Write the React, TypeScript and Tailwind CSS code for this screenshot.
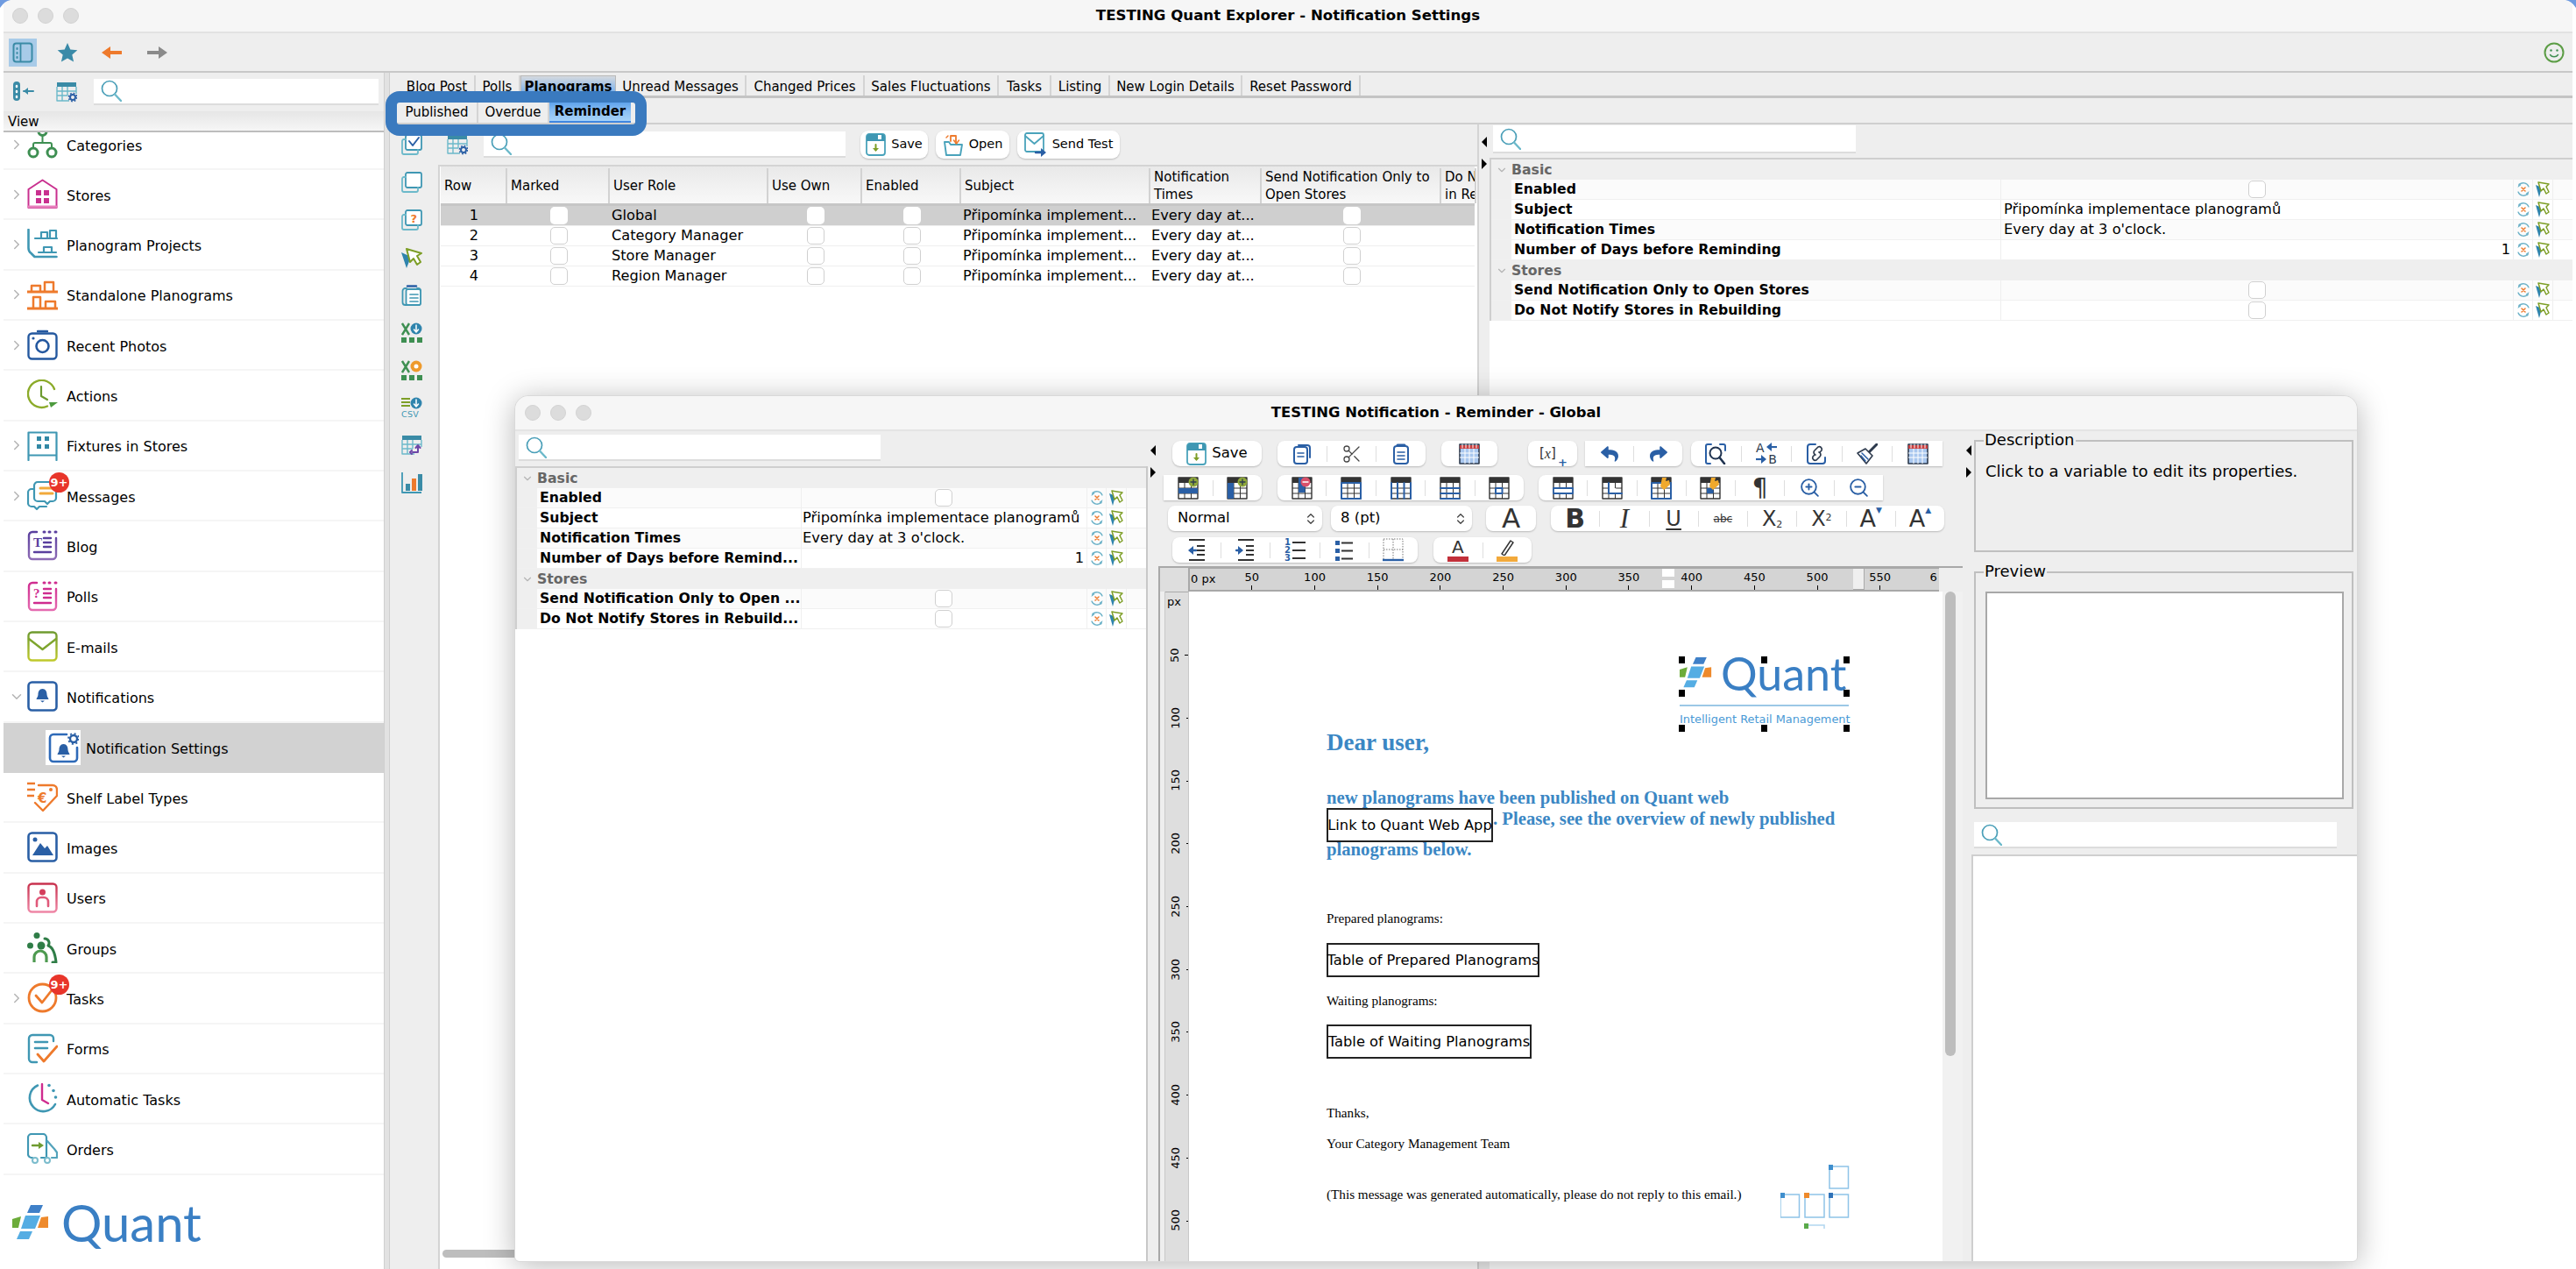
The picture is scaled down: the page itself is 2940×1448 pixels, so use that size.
import type { ReactNode } from "react";
import { Fragment } from "react";
import { ChevronDown, ChevronRight, ChevronsUpDown, Scissors, ZoomIn, ZoomOut } from "lucide-react";
import { FaReply, FaShare } from "react-icons/fa";

const TEAL = "#3f97b3";
const NAVY = "#2a5fa5";

type SvgProps = { w: number; h?: number; vb?: string; children: ReactNode };

const Svg = ({ w, h, vb, children }: SvgProps) => (
  <svg
    width={w}
    height={h ?? w}
    viewBox={vb ?? `0 0 ${w} ${h ?? w}`}
    fill="none"
    strokeLinecap="round"
    strokeLinejoin="round"
    className="shrink-0 block"
  >
    {children}
  </svg>
);

const SearchIcon = () => (
  <Svg w={24} h={25}>
    <circle cx="10" cy="10" r="8.5" stroke="#4a9fb8" strokeWidth="1.7" />
    <path d="M16 16.5 23 24" stroke="#6cb9ca" strokeWidth="2.4" />
  </Svg>
);

const SearchBox = ({ className }: { className: string }) => (
  <div className={`flex items-center pl-[8px] bg-white border-b-2 border-[#dcdcdc] ${className}`}>
    <SearchIcon />
  </div>
);

/* sidebar icons, all 35 px */
const IconCategories = () => (
  <Svg w={35}>
    <g stroke="#3e8f52" strokeWidth="3">
      <circle cx="17.5" cy="3" r="4.5" />
      <circle cx="7" cy="27" r="5" />
      <circle cx="28" cy="27" r="5" />
      <path d="M17.5 8v8M7 22v-4a2 2 0 0 1 2-2h17a2 2 0 0 1 2 2v4" strokeWidth="2" />
    </g>
  </Svg>
);
const IconStores = () => (
  <Svg w={35}>
    <path d="M1.5 12 17.5 1.5 33.5 12v21h-32z" stroke="#c9308f" strokeWidth="2" />
    <path d="M1.5 32h32" stroke="#e77fbb" strokeWidth="3" />
    <path d="M10 13h6v6h-6zM19 13h6v6h-6zM10 22h6v6h-6zM19 22h6v6h-6z" fill="#c9308f" />
  </Svg>
);
const IconProjects = () => (
  <Svg w={35}>
    <g stroke={TEAL} strokeWidth="2.6">
      <path d="M1.5 1v21q0 4 3 6l4 4h25" />
      <path d="M9 11h25M16 11V4h7v7M26 11V2h7v9M19 27v-6h9v6M13 27h20" strokeWidth="2.2" />
    </g>
  </Svg>
);
const IconStandalone = () => (
  <Svg w={35}>
    <g stroke="#ee7a2c" strokeWidth="3" strokeLinecap="butt">
      <path d="M0 14h35M0 33h35" />
      <path d="M5 13V7h10v6M20 13V3h10v10M7 32V20h8v12M21 32v-7h11v7" strokeWidth="2.5" />
    </g>
  </Svg>
);
const IconPhotos = () => (
  <Svg w={35}>
    <rect x="1.5" y="4.5" width="32" height="29" rx="4" stroke="#24589f" strokeWidth="2.4" />
    <circle cx="17.5" cy="19" r="7" stroke="#24589f" strokeWidth="2.6" />
    <circle cx="7" cy="10" r="1.6" fill="#24589f" />
    <path d="M12 2h11" stroke="#24589f" strokeWidth="2.4" />
  </Svg>
);
const IconActions = () => (
  <Svg w={35}>
    <path d="M23 30.5A15.5 15.5 0 1 1 31 11" stroke="#8cab2a" strokeWidth="2.4" />
    <path d="M16 8v11l7 4" stroke="#6d9b30" strokeWidth="2.2" />
    <path d="M25 26h10l-8 6z" fill="#4d9a3e" />
  </Svg>
);
const IconFixtures = () => (
  <Svg w={35}>
    <path d="M1.5 34V2.5h32V34M1.5 28.5h32" stroke={TEAL} strokeWidth="2.2" />
    <path d="M11 7h5v5h-5zM20 7h5v5h-5zM11 16h5v5h-5zM20 16h5v5h-5z" fill="#3288a5" />
  </Svg>
);
const IconMessages = () => (
  <Svg w={35}>
    <path d="M8 10H5a4 4 0 0 0-4 4v12a4 4 0 0 0 4 4h3l3 3 3-3h8" stroke={TEAL} strokeWidth="2.2" />
    <path d="M12 2h17a4 4 0 0 1 4 4v14a4 4 0 0 1-4 4h-3l-3 3-3-3h-8a4 4 0 0 1-4-4V6a4 4 0 0 1 4-4z" stroke={TEAL} strokeWidth="2.2" fill="#fff" />
    <path d="M15 9h14M15 15h14" stroke="#f2a93b" strokeWidth="3" />
  </Svg>
);
const ListFrame = ({ a, b, id, glyph }: { a: string; b: string; id: string; glyph: string }) => (
  <Svg w={35}>
    <defs>
      <linearGradient id={id} x1="0" y1="0" x2="0" y2="1">
        <stop offset="0" stopColor={a} />
        <stop offset="1" stopColor={b} />
      </linearGradient>
    </defs>
    <path d="M11 2H6a4 4 0 0 0-4 4v23a4 4 0 0 0 4 4h23a4 4 0 0 0 4-4V9" stroke={`url(#${id})`} strokeWidth="2.4" />
    <path d="M19 2h1M25 2h1M32 2h1" stroke={a} strokeWidth="3" />
    <text x="7" y="19" fontSize="15" fontWeight="700" fontFamily="Liberation Serif, serif" fill={a}>{glyph}</text>
    <path d="M19 9h8M19 14h8M19 19h8M8 25h19" stroke={a} strokeWidth="2.4" />
  </Svg>
);
const IconBlog = () => <ListFrame id="blogg" a="#5a3f9e" b="#8d6bb5" glyph="T" />;
const IconPolls = () => <ListFrame id="pollg" a="#cf2c8f" b="#e56ab0" glyph="?" />;
const IconEmails = () => (
  <Svg w={35}>
    <defs>
      <linearGradient id="mailg" x1="0" y1="0" x2="0" y2="1">
        <stop offset="0" stopColor="#6f9b30" />
        <stop offset="1" stopColor="#bfc92c" />
      </linearGradient>
    </defs>
    <rect x="1.5" y="1.5" width="32" height="32" rx="4" stroke="url(#mailg)" strokeWidth="2.4" />
    <path d="M2 9l15.5 12L33 9" stroke="#7ea52e" strokeWidth="2.4" />
  </Svg>
);
const Bell = ({ x = 0, y = 0 }: { x?: number; y?: number }) => (
  <g transform={`translate(${x} ${y})`}>
    <path d="M7 0c3.5 0 5 3 5 6.5 0 2.5 2 4.5 2 5.5H0c0-1 2-3 2-5.5C2 3 3.5 0 7 0z" fill={NAVY} />
    <path d="M4.5 13.5h5l-2.5 2z" fill={NAVY} />
  </g>
);
const IconNotifications = () => (
  <Svg w={35}>
    <rect x="1.5" y="1.5" width="32" height="32" rx="4" stroke={NAVY} strokeWidth="2.6" />
    <Bell x={10.5} y={9} />
  </Svg>
);
const IconNotificationSettings = () => (
  <Svg w={35}>
    <path d="M21 2H6a4 4 0 0 0-4 4v23a4 4 0 0 0 4 4h23a4 4 0 0 0 4-4V17" stroke="#2e6ab8" strokeWidth="2.6" />
    <Bell x={10.5} y={13} />
    <circle cx="29" cy="7" r="4" stroke={NAVY} strokeWidth="2.4" />
    <circle cx="29" cy="7" r="6" stroke={NAVY} strokeWidth="1.8" strokeDasharray="2 2.7" strokeLinecap="butt" />
  </Svg>
);
const IconShelfLabel = () => (
  <Svg w={35}>
    <path d="M13 4h16a5 5 0 0 1 5 5v7L18 33 9 24" stroke="#ee7a2c" strokeWidth="2.4" />
    <path d="M0 2h9M0 9h9M0 16h8" stroke="#ee7a2c" strokeWidth="2.4" strokeLinecap="butt" />
    <circle cx="27" cy="9" r="2" fill="#ee7a2c" />
    <text x="12" y="24" fontSize="15" fontWeight="700" fontFamily="DejaVu Sans, sans-serif" fill="#ee7a2c">€</text>
  </Svg>
);
const IconImages = () => (
  <Svg w={35}>
    <rect x="1.5" y="1.5" width="32" height="32" rx="4" stroke={NAVY} strokeWidth="2.6" />
    <path d="M6 27 15 13l5 6 3-3 7 11z" fill={NAVY} />
    <circle cx="9" cy="9" r="2.5" fill={NAVY} />
  </Svg>
);
const IconUsers = () => (
  <Svg w={35}>
    <defs>
      <linearGradient id="userg" x1="0" y1="0" x2="0" y2="1">
        <stop offset="0" stopColor="#c8324e" />
        <stop offset="1" stopColor="#ef87a6" />
      </linearGradient>
    </defs>
    <rect x="1.5" y="1.5" width="32" height="32" rx="4" stroke="url(#userg)" strokeWidth="2.4" />
    <circle cx="17.5" cy="11" r="3.5" fill="#d43e5c" />
    <path d="M11 27v-5a5 5 0 0 1 5-5h3a5 5 0 0 1 5 5v5" stroke="#e0597a" strokeWidth="2.6" />
    <path d="M16 21h3" stroke="#fff" strokeWidth="1.5" />
  </Svg>
);
const IconGroups = () => (
  <Svg w={35}>
    <circle cx="11" cy="3.5" r="3.5" fill="#2f7d47" />
    <circle cx="3.5" cy="15" r="3.5" fill="#2f7d47" />
    <circle cx="16" cy="15" r="4.5" fill="#2f7d47" />
    <path d="M20 7a5 5 0 0 1 4 8c6 2 8 10 9 19h-4" stroke="#2f7d47" strokeWidth="3" />
    <path d="M8 34v-6a7 7 0 0 1 14 0v6" stroke="#4e9a50" strokeWidth="3.2" strokeLinecap="butt" />
  </Svg>
);
const IconTasks = () => (
  <Svg w={35}>
    <circle cx="17.5" cy="17.5" r="15.5" stroke="#ee7a2c" strokeWidth="2.8" />
    <path d="M10 15l7 8 11-14" stroke="#ee7a2c" strokeWidth="2.8" />
  </Svg>
);
const IconForms = () => (
  <Svg w={35}>
    <path d="M30 9V6a4 4 0 0 0-4-4H6a4 4 0 0 0-4 4v23a4 4 0 0 0 4 4h5" stroke={TEAL} strokeWidth="2.4" />
    <path d="M9 10h14M9 17h14" stroke={TEAL} strokeWidth="2.6" />
    <path d="M12 24l7 8 15-17" stroke="#ee7a2c" strokeWidth="2.8" />
  </Svg>
);
const IconAuto = () => (
  <Svg w={35}>
    <path d="M12 2.5A15.5 15.5 0 1 0 32 24" stroke={TEAL} strokeWidth="2.6" />
    <path d="M17 1v18l7 4" stroke="#cf2c8f" strokeWidth="2.4" />
    <circle cx="25" cy="2.5" r="1.8" fill={TEAL} />
    <circle cx="30" cy="8.5" r="1.8" fill={TEAL} />
    <circle cx="32.5" cy="16" r="1.8" fill={TEAL} />
  </Svg>
);
const IconOrders = () => (
  <Svg w={35}>
    <path d="M6 28H5a4 4 0 0 1-4-4V5a4 4 0 0 1 4-4h13a4 4 0 0 1 4 4v23h-6" stroke={TEAL} strokeWidth="2.2" />
    <path d="M23 9l8 9 3 4v6h-6" stroke="#53a3bb" strokeWidth="2.2" />
    <circle cx="9" cy="31" r="3" stroke="#7bbccd" strokeWidth="2" />
    <circle cx="23" cy="31" r="3" stroke="#7bbccd" strokeWidth="2" />
    <path d="M6 14h9" stroke="#6f9b30" strokeWidth="2.4" />
    <path d="M13 10l6 4-6 4z" fill="#6f9b30" />
  </Svg>
);

const QuantMark = ({ w }: { w: number }) => (
  <svg width={w} height={w} viewBox="0 0 42 42" className="shrink-0 block">
    <path d="M21 1h14l-4 9H17z" fill="#3f80c8" />
    <path d="M0 17l10-3-3 13H0z" fill="#6cac3a" />
    <path d="M15 13h17l-6 15H10z" fill="#55ade3" />
    <path d="M33 15l8-1v13H29z" fill="#ee8a2c" />
    <path d="M9 31h14l-4 9H5z" fill="#55ade3" />
  </svg>
);

/* small property row icons */
const ResetIcon = () => (
  <Svg w={16} h={20}>
    <path d="M3 5A6.5 6.5 0 0 1 14 7M13 15A6.5 6.5 0 0 1 2 13" stroke="#6cb2c8" strokeWidth="1.3" />
    <path d="M1.5 8 3 3l2.5 2zM14.5 12 13 17l-2.5-2z" fill="#6cb2c8" />
    <path d="M6 8l4 4M10 8l-4 4" stroke="#ee7a2c" strokeWidth="1.5" />
  </Svg>
);
const PointerIcon = () => (
  <Svg w={16} h={20}>
    <path d="M0 5 7 8 4 19z" fill="#2f84ad" />
    <path d="M3 2 15 4l-3 3 3 6-3 2-3-6-3 3z" fill="#fff" stroke="#7d9e26" strokeWidth="1.5" />
  </Svg>
);

/* left toolbar icons of the main panel */
const CopyFrame = ({ children }: { children?: ReactNode }) => (
  <Svg w={24}>
    <rect x="5" y="1" width="18" height="17" rx="2" fill="#fff" stroke={TEAL} strokeWidth="1.8" />
    <path d="M5 6H3a2 2 0 0 0-2 2v13a2 2 0 0 0 2 2h14a2 2 0 0 0 2-2v-3" stroke="#6cb9ca" strokeWidth="1.8" />
    {children}
  </Svg>
);
const SideCheck = () => <CopyFrame><path d="M9 8l4 5 7-9" stroke={NAVY} strokeWidth="2" /></CopyFrame>;
const SideCopy = () => <CopyFrame />;
const SideQuestion = () => (
  <CopyFrame>
    <text x="10.5" y="15" fontSize="13" fontWeight="700" fontFamily="DejaVu Sans, sans-serif" fill="#ee7a2c">?</text>
  </CopyFrame>
);
const SidePointer = () => (
  <Svg w={24}>
    <path d="M0 6 11 11 6 24z" fill="#2f84ad" />
    <path d="M6 2 23 7l-5 3 4 7-4 3-4-7-4 4z" fill="#fff" stroke="#7d9e26" strokeWidth="2" />
  </Svg>
);
const SideClipboard = () => (
  <Svg w={24}>
    <path d="M6 4H4.5a3 3 0 0 0-3 3v13a3 3 0 0 0 3 3H19a3 3 0 0 0 3-3V7a3 3 0 0 0-3-3h-1" stroke={TEAL} strokeWidth="1.8" />
    <path d="M7 1.5h10" stroke={NAVY} strokeWidth="2.4" />
    <rect x="5.5" y="5" width="16.5" height="18" rx="2" fill="#fff" stroke={TEAL} strokeWidth="1.8" />
    <path d="M10 11h9M10 15h9M10 19h9" stroke={TEAL} strokeWidth="1.7" />
  </Svg>
);
const ExportIcon = ({ dot, glyph }: { dot: string; glyph: ReactNode }) => (
  <Svg w={24}>
    <path d="M1 2l8 13M9 2 1 15" stroke="#3e8f52" strokeWidth="2.4" strokeLinecap="butt" />
    <circle cx="17" cy="8" r="6.5" fill={dot} />
    {glyph}
    <path d="M0 18h6v6H0zM9 18h6v6H9zM18 18h6v6h-6z" fill="#3e8f52" />
  </Svg>
);
const SideCsv = () => (
  <Svg w={24}>
    <path d="M0 2h10M0 6h10M0 10h10" stroke="#7d9e26" strokeWidth="2.2" strokeLinecap="butt" />
    <circle cx="17" cy="7" r="6.5" fill="#2f84ad" />
    <path d="M17 3v7M14.5 8l2.5 3 2.5-3" stroke="#fff" strokeWidth="1.5" />
    <text x="0" y="23" fontSize="9.5" fontFamily="DejaVu Sans, sans-serif" letterSpacing="0.3" fill={TEAL}>CSV</text>
  </Svg>
);
const TableGear = ({ arrows }: { arrows?: boolean }) => (
  <Svg w={24}>
    <rect x="1" y="1" width="22" height="5" fill="#3a8ba6" />
    <path d="M1 6v16h14M23 6v8M1 11h14M1 16h12M7 6v16M13 6v10M13 11h10" stroke="#6cb9ca" strokeWidth="1.4" strokeLinecap="butt" />
    {arrows ? (
      <path d="M13 20h6v-7M16.5 15l2.5-3 2.5 3M12 18l-2 2 2 2" stroke="#6d47a8" strokeWidth="2" />
    ) : (
      <>
        <circle cx="19" cy="18" r="3" stroke={NAVY} strokeWidth="2" />
        <circle cx="19" cy="18" r="4.7" stroke={NAVY} strokeWidth="1.5" strokeDasharray="1.8 1.9" strokeLinecap="butt" />
      </>
    )}
  </Svg>
);
const SideChart = () => (
  <Svg w={24}>
    <path d="M1 0v23h22" stroke={TEAL} strokeWidth="1.8" strokeLinecap="butt" />
    <path d="M5 13h5v8H5z" fill="#3a8ba6" />
    <path d="M12 7h5v14h-5z" fill="#ee7a2c" />
    <path d="M19 2h5v19h-5z" fill="#3a8ba6" />
  </Svg>
);

const SaveIcon = () => (
  <Svg w={23} h={26}>
    <rect x="1" y="1" width="21" height="24" rx="3" fill="#fff" stroke="#4aa3bb" strokeWidth="1.8" />
    <path d="M1 5a4 4 0 0 1 4-4h13a4 4 0 0 1 4 4v4H1z" fill="#3f97b3" />
    <path d="M14 2h4v5h-4z" fill="#fff" />
    <path d="M11.5 13v6" stroke="#7d9e26" strokeWidth="2" />
    <path d="M8 17h7l-3.5 4z" fill="#7d9e26" />
  </Svg>
);
const OpenIcon = () => (
  <Svg w={24} h={26}>
    <path d="M2 10h5l2 3h13l-2 12H4z" stroke="#4aa3bb" strokeWidth="1.9" />
    <path d="M9 9V3h6v8" stroke="#ee7a2c" strokeWidth="1.8" />
    <path d="M12.5 8l3 4 3-4" stroke="#ee7a2c" strokeWidth="1.5" />
    <path d="M6 3l-2 2" stroke="#ee7a2c" strokeWidth="1.5" />
  </Svg>
);
const SendIcon = () => (
  <Svg w={26} h={28}>
    <rect x="1" y="1" width="21" height="21" rx="2" fill="#fff" stroke="#4aa3bb" strokeWidth="1.8" />
    <path d="M1 4l10.5 9L22 4" stroke="#4aa3bb" strokeWidth="1.8" />
    <path d="M13 23h9" stroke={NAVY} strokeWidth="2.4" />
    <path d="M19 18l6 5-6 5z" fill={NAVY} />
  </Svg>
);

/* editor toolbar icons */
const PageIcon = () => (
  <Svg w={24}>
    <path d="M8 2h10a3 3 0 0 1 3 3v11" stroke={NAVY} strokeWidth="2" />
    <rect x="3" y="4" width="15" height="19" rx="3" fill="#fff" stroke={NAVY} strokeWidth="2" />
    <path d="M7 11h7M7 15h7" stroke={NAVY} strokeWidth="1.6" />
  </Svg>
);
const PasteIcon = () => (
  <Svg w={24}>
    <rect x="4" y="3" width="16" height="20" rx="3" stroke={NAVY} strokeWidth="2" />
    <path d="M8 2h8" stroke={NAVY} strokeWidth="3" />
    <path d="M8 10h8M8 14h8M8 18h8" stroke={NAVY} strokeWidth="1.6" />
  </Svg>
);
const CalendarIcon = () => (
  <Svg w={24}>
    <rect x="1" y="1" width="22" height="22" fill="#a9c7ee" stroke="#2d3a4d" strokeWidth="1.6" />
    <path d="M1 2h22v4H1z" fill="#c94040" />
    <path d="M4 1v4M8 1v4M12 1v4M16 1v4M20 1v4" stroke="#fff" strokeWidth="1" />
    <path d="M1 11h22M1 16h22M7 6v17M12 6v17M17 6v17" stroke="#fff" strokeWidth="1" strokeLinecap="butt" />
  </Svg>
);
const VariableIcon = () => (
  <div className="relative w-[34px] h-[24px] flex items-center justify-start pl-[2px] text-[15px] text-[#333]">
    <span>[</span>
    <span className="italic font-['Liberation_Serif',serif] text-[16px]">x</span>
    <span>]</span>
    <span className="absolute right-[0px] -bottom-[4px] text-[13px] leading-none font-bold text-[#2a5fa5]">+</span>
  </div>
);
const FindIcon = () => (
  <Svg w={24}>
    <path d="M7 1H3a2 2 0 0 0-2 2v18a2 2 0 0 0 2 2h3M17 1h4a2 2 0 0 1 2 2v5" stroke={NAVY} strokeWidth="2" />
    <circle cx="12" cy="11" r="6.5" stroke="#1f3350" strokeWidth="2" />
    <path d="M16.5 16 22 23" stroke="#1f3350" strokeWidth="2.6" />
  </Svg>
);
const ReplaceIcon = () => (
  <div className="relative w-[24px] h-[27px] text-[#2d3a4d] text-[14px] leading-none">
    <span className="absolute left-0 top-0">A</span>
    <span className="absolute right-0 bottom-0">B</span>
    <svg width="12" height="10" viewBox="0 0 12 10" className="absolute right-0 top-[1px]">
      <path d="M5 5h7" stroke={NAVY} strokeWidth="2.2" />
      <path d="M0 5l6-5v10z" fill={NAVY} />
    </svg>
    <svg width="12" height="10" viewBox="0 0 12 10" className="absolute left-0 bottom-[2px]">
      <path d="M0 5h7" stroke={NAVY} strokeWidth="2.2" />
      <path d="M12 5 6 0v10z" fill={NAVY} />
    </svg>
  </div>
);
const LinkIcon = () => (
  <Svg w={24}>
    <path d="M11 1H5a3 3 0 0 0-3 3v16a3 3 0 0 0 3 3h14a3 3 0 0 0 3-3V16" stroke={NAVY} strokeWidth="2" />
    <path d="M9 13l-2 2a3 3 0 0 0 4 4l4-4a3 3 0 0 0-1-5M15 10l2-2a3 3 0 0 0-4-4L9 8a3 3 0 0 0 1 5" stroke="#2d3a4d" strokeWidth="1.7" transform="translate(1 0)" />
  </Svg>
);
const BrushIcon = () => (
  <Svg w={24}>
    <path d="M23 1 14 10" stroke="#2d3a4d" strokeWidth="3" />
    <path d="M10 6l8 8-7 9-10-12z" fill="#fff" stroke="#2d3a4d" strokeWidth="1.6" />
    <path d="M6 11l7 7M5 14l5 6" stroke={NAVY} strokeWidth="1.5" />
  </Svg>
);

type TableIconProps = { hl?: ReactNode; badge?: ReactNode };
const TableIcon = ({ hl, badge }: TableIconProps) => (
  <Svg w={24} h={26}>
    <rect x="1" y="1" width="22" height="24" fill="#fff" stroke="#333" strokeWidth="1.4" />
    <rect x="1" y="1" width="22" height="6" fill="#333" />
    <path d="M1 13h22M1 19h22M8 7v18M15.5 7v18" stroke="#333" strokeWidth="1" strokeLinecap="butt" />
    {hl}
    {badge}
  </Svg>
);
const PlusBadge = () => (
  <g>
    <circle cx="18" cy="6" r="5.5" fill="#8fa83a" />
    <path d="M15 6h6M18 3v6" stroke="#2d3a4d" strokeWidth="1.3" />
  </g>
);
const MinusBadge = () => (
  <g>
    <circle cx="16" cy="6" r="5.5" fill="#d9506a" />
    <path d="M13 6h6" stroke="#fff" strokeWidth="1.3" />
  </g>
);
const WrenchBadge = () => <path d="M13 1h5l-1 4 4-1 1 5-7 6-4-4z" fill="#f0a92c" />;

const blue = "#2a5fa5";
const tableIcons = {
  rowBelow: <TableIcon hl={<rect x="1" y="13" width="22" height="6" fill={blue} />} badge={<PlusBadge />} />,
  colLeft: <TableIcon hl={<rect x="1" y="7" width="7" height="18" fill={blue} />} badge={<PlusBadge />} />,
  delCol: <TableIcon hl={<rect x="8" y="1" width="7.5" height="17" fill={blue} />} badge={<MinusBadge />} />,
  outer: <TableIcon hl={<rect x="1" y="7" width="22" height="18" fill="none" stroke={blue} strokeWidth="2" />} />,
  vert: <TableIcon hl={<path d="M8 7v18M15.5 7v18M1 7v18M23 7v18" stroke={blue} strokeWidth="2" />} />,
  horz: <TableIcon hl={<path d="M1 13h22M1 19h22M1 25h22" stroke={blue} strokeWidth="2" />} />,
  inner: <TableIcon hl={<rect x="8" y="13" width="7.5" height="6" fill="none" stroke={blue} strokeWidth="2" />} />,
  merge: <TableIcon hl={<rect x="1" y="13" width="22" height="6" fill="#fff" stroke={blue} strokeWidth="1.8" />} />,
  split: <TableIcon hl={<path d="M8 7v12h15" stroke={blue} strokeWidth="2" fill="#fff" />} />,
  propT: <TableIcon hl={<rect x="1" y="7" width="22" height="18" fill="none" stroke={blue} strokeWidth="2" />} badge={<WrenchBadge />} />,
  propC: <TableIcon hl={<rect x="8" y="13" width="7.5" height="6" fill={blue} />} badge={<WrenchBadge />} />,
};

const IndentIcon = ({ out }: { out?: boolean }) => (
  <Svg w={24} h={27}>
    <path d="M3 2h18M3 25h18M12 9h9M12 14h9M12 19h9" stroke="#333" strokeWidth="2" strokeLinecap="butt" />
    <path d={out ? "M2 14l6-5v10z" : "M9 14l-6-5v10z"} fill={NAVY} />
    <path d={out ? "M6 14h5" : "M1 14h5"} stroke={NAVY} strokeWidth="2.4" />
  </Svg>
);
const NumListIcon = () => (
  <div className="flex flex-col text-[10px] leading-[9px] font-bold text-[#2a5fa5] w-[24px] h-[27px] justify-center">
    {["1", "2", "3"].map((n) => (
      <div key={n} className="flex items-center gap-[2px]">
        {n}
        <div className="flex-1 h-[2px] bg-[#333]" />
      </div>
    ))}
  </div>
);
const BulletListIcon = () => (
  <Svg w={24} h={27}>
    <path d="M2 3h5v5H2zM2 12h5v5H2zM2 21h5v5H2z" fill={NAVY} />
    <path d="M9 5.5h13M9 14.5h13M9 23.5h13" stroke="#333" strokeWidth="2" strokeLinecap="butt" />
  </Svg>
);
const BordersIcon = () => (
  <Svg w={24} h={27}>
    <path d="M1 1h22v24H1zM12 1v24M1 13h22" stroke="#777" strokeWidth="1" strokeDasharray="1.5 1.5" strokeLinecap="butt" />
    <path d="M0 25h24" stroke={NAVY} strokeWidth="2.4" strokeLinecap="butt" />
  </Svg>
);
const ColorA = ({ bar, pen }: { bar: string; pen?: boolean }) => (
  <div className="flex flex-col items-center w-[24px] h-[27px]">
    {pen ? (
      <Svg w={20} h={20}>
        <path d="M4 18 14 3l3 2L7 20z" fill="#fff" stroke="#333" strokeWidth="1.5" />
      </Svg>
    ) : (
      <span className="text-[20px] leading-[20px] text-[#333]">A</span>
    )}
    <div className={`w-[24px] h-[6px] mt-[1px] ${bar}`} />
  </div>
);

const GText = ({ children, className }: { children: ReactNode; className?: string }) => (
  <span className={`leading-none text-[#333] ${className ?? ""}`}>{children}</span>
);

/* white rounded button group of the editor toolbar */
const Group = ({ items, className }: { items: ReactNode[]; className: string }) => (
  <div className={`flex items-center h-[29px] bg-white rounded-[8px] shadow-[0_1px_2px_rgba(0,0,0,0.22)] shrink-0 ${className}`}>
    {items.map((item, i) => (
      <Fragment key={i}>
        {i > 0 && <div className="w-px h-[18px] bg-[#dedede]" />}
        <div className="flex-1 flex items-center justify-center h-full">{item}</div>
      </Fragment>
    ))}
  </div>
);

const PillButton = ({ icon, label, className }: { icon: ReactNode; label: string; className: string }) => (
  <div className={`flex items-center justify-center gap-[6px] bg-white rounded-[9px] shadow-[0_1px_2px_rgba(0,0,0,0.22)] ${className}`}>
    {icon}
    {label}
  </div>
);

const Checkbox = ({ plain }: { plain?: boolean }) => (
  <div className={`w-[20px] h-[20px] rounded-[5px] bg-white ${plain ? "" : "border border-[#d0d0d0]"}`} />
);

const Lights = ({ className }: { className: string }) => (
  <div className={`flex gap-[11px] ${className}`}>
    <div className="w-[18px] h-[18px] rounded-full bg-[#dcdcdc] border border-[#d2d2d2]" />
    <div className="w-[18px] h-[18px] rounded-full bg-[#dcdcdc] border border-[#d2d2d2]" />
    <div className="w-[18px] h-[18px] rounded-full bg-[#dcdcdc] border border-[#d2d2d2]" />
  </div>
);

const SplitArrows = ({ className }: { className: string }) => (
  <div className={`flex flex-col items-center gap-[13px] shrink-0 ${className}`}>
    <div className="w-0 h-0 border-y-[6px] border-y-transparent border-r-[6px] border-r-black" />
    <div className="w-0 h-0 border-y-[6px] border-y-transparent border-l-[6px] border-l-black" />
  </div>
);

/* sidebar */
type NavItem = { label: string; icon: ReactNode; arrow?: "right" | "down"; badge?: boolean };
const navItems: NavItem[] = [
  { label: "Stores", icon: <IconStores />, arrow: "right" },
  { label: "Planogram Projects", icon: <IconProjects />, arrow: "right" },
  { label: "Standalone Planograms", icon: <IconStandalone />, arrow: "right" },
  { label: "Recent Photos", icon: <IconPhotos />, arrow: "right" },
  { label: "Actions", icon: <IconActions /> },
  { label: "Fixtures in Stores", icon: <IconFixtures />, arrow: "right" },
  { label: "Messages", icon: <IconMessages />, arrow: "right", badge: true },
  { label: "Blog", icon: <IconBlog /> },
  { label: "Polls", icon: <IconPolls /> },
  { label: "E-mails", icon: <IconEmails /> },
  { label: "Notifications", icon: <IconNotifications />, arrow: "down" },
];
const navItemsAfter: NavItem[] = [
  { label: "Shelf Label Types", icon: <IconShelfLabel /> },
  { label: "Images", icon: <IconImages /> },
  { label: "Users", icon: <IconUsers /> },
  { label: "Groups", icon: <IconGroups /> },
  { label: "Tasks", icon: <IconTasks />, arrow: "right", badge: true },
  { label: "Forms", icon: <IconForms /> },
  { label: "Automatic Tasks", icon: <IconAuto /> },
  { label: "Orders", icon: <IconOrders /> },
];

const NavRow = ({ item }: { item: NavItem }) => (
  <div className="flex items-center h-[57.33px] shrink-0 border-b-2 border-[#f5f5f5] text-[16px]">
    <div className="w-[27px] flex justify-center pl-[2px] shrink-0">
      {item.arrow === "right" && <ChevronRight size={18} color="#b4b4b4" strokeWidth={2} />}
      {item.arrow === "down" && <ChevronDown size={18} color="#b4b4b4" strokeWidth={2} />}
    </div>
    <div className="relative">
      {item.icon}
      {item.badge && (
        <div className="absolute left-[25px] -top-[9px] w-[23px] h-[23px] rounded-full bg-[#e8352a] text-white text-[13px] font-bold flex items-center justify-center">
          9+
        </div>
      )}
    </div>
    <span className="ml-[10px] pt-[4px]">{item.label}</span>
  </div>
);

const Sidebar = () => (
  <aside className="w-[434px] shrink-0 flex flex-col">
    <div className="h-[43px] flex items-center shrink-0">
      <div className="w-[46px] flex justify-center">
        <Svg w={26}>
          <rect x="1" y="1" width="8" height="22" rx="4" fill="#3a8ba6" />
          <path d="M5 6v1M5 12v1M5 18v1" stroke="#fff" strokeWidth="2.5" />
          <path d="M13 12h11" stroke="#3a8ba6" strokeWidth="2" />
          <path d="M13 12l5-4v8z" fill="#3a8ba6" />
        </Svg>
      </div>
      <div className="w-[51px] flex justify-center">
        <TableGear />
      </div>
      <SearchBox className="w-[325px] h-[30px] ml-[6px]" />
    </div>
    <div className="h-[24px] mt-[1px] shrink-0 flex items-center pl-[5px] pt-[2px] text-[15px] bg-linear-to-b from-[#e6e6e6] to-[#f6f6f6] border-b-2 border-[#bdbdbd]">
      View
    </div>
    <div className="flex-1 flex flex-col bg-white overflow-hidden">
      <div className="h-[43px] shrink-0 overflow-hidden">
        <div className="-mt-[14px]">
          <NavRow item={{ label: "Categories", icon: <IconCategories />, arrow: "right" }} />
        </div>
      </div>
      {navItems.map((item) => (
        <NavRow key={item.label} item={item} />
      ))}
      <div className="flex items-center h-[57.33px] shrink-0 bg-[#d2d2d2] text-[16px]">
        <div className="ml-[48px] w-[40px] h-[40px] bg-white flex items-center justify-center shrink-0">
          <IconNotificationSettings />
        </div>
        <span className="ml-[6px] pt-[4px]">Notification Settings</span>
      </div>
      {navItemsAfter.map((item) => (
        <NavRow key={item.label} item={item} />
      ))}
      <div className="flex items-center ml-[10px] mt-[29px]">
        <QuantMark w={42} />
        <span className="ml-[14px] text-[58px] leading-[50px] font-['Lato',sans-serif] text-[#3a7fc4]">Quant</span>
      </div>
    </div>
  </aside>
);

/* tabs */
const topTabs = [
  { label: "Blog Post", w: "w-[87px]" },
  { label: "Polls", w: "w-[51px]" },
  { label: "Planograms", w: "w-[109px]", active: true },
  { label: "Unread Messages", w: "w-[149px]" },
  { label: "Changed Prices", w: "w-[135px]" },
  { label: "Sales Fluctuations", w: "w-[153px]" },
  { label: "Tasks", w: "w-[60px]" },
  { label: "Listing", w: "w-[67px]" },
  { label: "New Login Details", w: "w-[151px]" },
  { label: "Reset Password", w: "w-[135px]" },
];

const TopTabs = () => (
  <div className="h-[29px] shrink-0 flex pl-[11px] border-b-[3px] border-[#c4c4c4] text-[15px]">
    {topTabs.map((t) =>
      t.active ? (
        <div
          key={t.label}
          className={`${t.w} mt-[3px] pt-[3px] flex items-center justify-center font-bold border border-b-0 border-[#b9b9b9] bg-linear-to-b from-[#d5d9de] to-[#6aa9ec]`}
        >
          {t.label}
        </div>
      ) : (
        <div key={t.label} className={`${t.w} mt-[3px] pt-[3px] flex items-center justify-center border-r-2 border-[#d4d4d4]`}>
          {t.label}
        </div>
      ),
    )}
  </div>
);

const SubTabs = () => (
  <div className="h-[30px] shrink-0 flex pl-[8px] pt-[5px] border-b-2 border-[#cfcfcf] text-[15px]">
    <div className="w-[93px] flex items-center justify-center border-r-2 border-[#d4d4d4]">Published</div>
    <div className="w-[81px] flex items-center justify-center border-r-2 border-[#d4d4d4]">Overdue</div>
    <div className="w-[93px] flex items-center justify-center font-bold bg-linear-to-b from-[#5fa3ec] via-[#8cc0f3] to-[#a6d2f8] border-b-2 border-[#3f86e0]">
      Reminder
    </div>
  </div>
);

/* notification table */
const ROWS = [
  { n: "1", role: "Global", active: true },
  { n: "2", role: "Category Manager" },
  { n: "3", role: "Store Manager" },
  { n: "4", role: "Region Manager" },
];

const HeaderCell = ({ children }: { children: ReactNode }) => (
  <div className="flex flex-col justify-center px-[4px] leading-[20px] overflow-hidden whitespace-nowrap border-r-2 border-[#d2d2d2]">
    {children}
  </div>
);

const NotificationTable = () => (
  <div className="text-[15px]">
    <div className="grid grid-cols-[76px_117px_181px_107px_113px_216px_127px_205px_40px] h-[45px] pt-[2px] ml-[1px] bg-linear-to-b from-[#e9e9e9] to-[#f8f8f8] border-b-[3px] border-[#c6c6c6]">
      <HeaderCell>Row</HeaderCell>
      <HeaderCell>Marked</HeaderCell>
      <HeaderCell>User Role</HeaderCell>
      <HeaderCell>Use Own</HeaderCell>
      <HeaderCell>Enabled</HeaderCell>
      <HeaderCell>Subject</HeaderCell>
      <HeaderCell>
        <span>Notification</span>
        <span>Times</span>
      </HeaderCell>
      <HeaderCell>
        <span>Send Notification Only to</span>
        <span>Open Stores</span>
      </HeaderCell>
      <HeaderCell>
        <span>Do N</span>
        <span>in Re</span>
      </HeaderCell>
    </div>
    {ROWS.map((r) => (
      <div
        key={r.n}
        className={`grid grid-cols-[76px_117px_181px_107px_113px_216px_127px_205px_40px] h-[23px] ml-[1px] text-[16.2px] leading-[20px] items-center border-b border-[#efefef] ${r.active ? "bg-[#cfcfcf]" : ""}`}
      >
        <div className="text-center">{r.n}</div>
        <div className="flex justify-center"><Checkbox plain={r.active} /></div>
        <div className="pl-[2px] whitespace-nowrap">{r.role}</div>
        <div className="flex justify-center"><Checkbox plain={r.active} /></div>
        <div className="flex justify-center"><Checkbox plain={r.active} /></div>
        <div className="pl-[2px] whitespace-nowrap">Připomínka implement...</div>
        <div className="pl-[1px] whitespace-nowrap">Every day at...</div>
        <div className="flex justify-center"><Checkbox plain={r.active} /></div>
        <div />
      </div>
    ))}
  </div>
);

/* property sheets */
type PropRow = { label: string; value?: string; check?: boolean; right?: string };
const mainProps: { section: string; rows: PropRow[] }[] = [
  {
    section: "Basic",
    rows: [
      { label: "Enabled", check: true },
      { label: "Subject", value: "Připomínka implementace planogramů" },
      { label: "Notification Times", value: "Every day at 3 o'clock." },
      { label: "Number of Days before Reminding", right: "1" },
    ],
  },
  {
    section: "Stores",
    rows: [
      { label: "Send Notification Only to Open Stores", check: true },
      { label: "Do Not Notify Stores in Rebuilding", check: true },
    ],
  },
];
const dialogProps: typeof mainProps = [
  {
    section: "Basic",
    rows: [
      { label: "Enabled", check: true },
      { label: "Subject", value: "Připomínka implementace planogramů" },
      { label: "Notification Times", value: "Every day at 3 o'clock." },
      { label: "Number of Days before Remind...", right: "1" },
    ],
  },
  {
    section: "Stores",
    rows: [
      { label: "Send Notification Only to Open ...", check: true },
      { label: "Do Not Notify Stores in Rebuild...", check: true },
    ],
  },
];

const PropSheet = ({ data, labelW, valuePad }: { data: typeof mainProps; labelW: string; valuePad: string }) => (
  <div className="border-t-2 border-[#cfcfcf] border-l-2 text-[15.7px] leading-[20px]">
    {data.map((s) => (
      <div key={s.section}>
        <div className="h-[23px] bg-[#efefef] flex items-center font-bold text-[#666]">
          <div className="w-[23px] flex justify-center shrink-0">
            <ChevronDown size={14} color="#b4b4b4" />
          </div>
          {s.section}
        </div>
        {s.rows.map((r, i) => (
          <div key={r.label} className={`h-[23px] flex items-center border-b border-[#f0f0f0] ${i % 2 === 0 ? "bg-[#fbfbfb]" : "bg-white"}`}>
            <div className="w-[23px] h-full bg-[#efefef] shrink-0" />
            <div className={`${labelW} shrink-0 pl-[3px] font-bold whitespace-nowrap overflow-hidden h-full flex items-center border-r border-[#efefef]`}>
              {r.label}
            </div>
            <div className={`flex-1 min-w-0 h-full flex items-center pr-[3px] whitespace-nowrap text-[16.3px] ${valuePad}`}>
              {r.check && (
                <div className="flex-1 flex justify-center">
                  <Checkbox />
                </div>
              )}
              {r.value}
              {r.right && <div className="flex-1 text-right">{r.right}</div>}
            </div>
            <div className="w-[23px] h-full flex items-center justify-center border-x border-[#efefef] shrink-0">
              <ResetIcon />
            </div>
            <div className="w-[23px] h-full flex items-center justify-center border-r border-[#efefef] shrink-0">
              <PointerIcon />
            </div>
            <div className="w-[22px] shrink-0" />
          </div>
        ))}
      </div>
    ))}
  </div>
);

/* editor */
const RULER = [50, 100, 150, 200, 250, 300, 350, 400, 450, 500, 550];

const HRuler = () => (
  <div className="flex h-[27px] shrink-0">
    <div className="w-[32px] bg-[#dedede] shrink-0" />
    <div className="relative flex flex-1 mr-[27px] bg-[#d4d4d4] border-l-2 border-b-2 border-t border-[#a8a8a8] overflow-hidden text-[13px]">
      <div className="w-[35px] shrink-0 pl-[1px] leading-[24px] whitespace-nowrap">0 px</div>
      {RULER.map((r) => (
        <div key={r} className="w-[71.7px] shrink-0 flex flex-col items-center">
          <span className="leading-[19px]">{r}</span>
          <div className="w-px h-[5px] bg-black" />
        </div>
      ))}
      <div className="pl-[21px] leading-[19px]">6</div>
      <div className="absolute left-[539px] top-0 w-[14px] h-full flex flex-col gap-[4px]">
        <div className="h-[9px] bg-white" />
        <div className="h-[9px] bg-white" />
      </div>
      <div className="absolute left-[757px] top-0 w-[13px] h-[24px] bg-[#efefef] border-b border-r border-[#aaa]" />
    </div>
  </div>
);

const VRuler = () => (
  <div className="w-[33px] shrink-0 pl-[5px]">
    <div className="h-full bg-[#dedede] border-x border-[#c8c8c8] overflow-hidden text-[13px]">
      <div className="h-[1px] bg-[#aaa]" />
      <div className="h-[36px] leading-[22px] pl-[2px]">px</div>
      {RULER.slice(0, 10).map((r) => (
        <div key={r} className="h-[71.7px] flex items-center">
          <span className="-rotate-90 block w-[24px] text-center">{r}</span>
          <div className="w-[5px] h-px bg-black" />
        </div>
      ))}
    </div>
  </div>
);

const LinkBox = ({ children, w }: { children: ReactNode; w: string }) => (
  <div className={`${w} h-[39px] shrink-0 border-2 border-[#222] flex items-center justify-center font-['DejaVu_Sans',sans-serif] font-normal text-[16.3px] text-black whitespace-nowrap`}>
    {children}
  </div>
);

const Handle = ({ className }: { className: string }) => <div className={`absolute w-[7px] h-[8px] bg-black ${className}`} />;

const DocLogo = () => (
  <div className="relative w-[193px] h-[85px] font-['Lato',sans-serif] text-[#3a7fc4]">
    <div className="flex items-start h-[40px]">
      <QuantMark w={37} />
      <span className="ml-[10px] text-[52px] leading-[38px] whitespace-nowrap">Quant</span>
    </div>
    <div className="h-[2px] bg-[#9cc8e6] mt-[15px]" />
    <div className="mt-[6px] text-[12.9px] leading-[18px] whitespace-nowrap font-['DejaVu_Sans',sans-serif] text-[#4a9ad6]">
      Intelligent Retail Management
    </div>
    <Handle className="-left-[1px] top-0" />
    <Handle className="left-[93px] top-0" />
    <Handle className="-right-[1px] top-0" />
    <Handle className="-left-[1px] top-[38px]" />
    <Handle className="-right-[1px] top-[38px]" />
    <Handle className="-left-[1px] top-[78px]" />
    <Handle className="left-[93px] top-[78px]" />
    <Handle className="-right-[1px] top-[78px]" />
  </div>
);

const Placeholders = () => (
  <svg width="84" height="76" viewBox="0 0 84 76" fill="none" className="absolute left-[675px] top-[654px]">
    <g stroke="#8ec3e8" strokeWidth="1.5">
      <path d="M56 2h21.5v25H56z" />
      <path d="M0 34h21.5v26H0zM28 34h22v26H28zM56 34h21.5v26H56z" />
      <path d="M28 73v-4h22v4" strokeOpacity="0.7" />
    </g>
    <path d="M55 0h5v6h-5z" fill="#3f8fce" />
    <path d="M-1 32h6v6h-6z" fill="#3f8fce" />
    <path d="M27 32h6v6h-6z" fill="#ee8a2c" />
    <path d="M55 32h5v6h-5z" fill="#2f72b8" />
    <path d="M27 67h5v6h-5z" fill="#5aaa4a" />
  </svg>
);

const Document = () => (
  <div className="relative flex-1 min-w-0 bg-white pl-[157px] overflow-hidden font-['Liberation_Serif',serif] text-black text-[15.2px] leading-[18px]">
    <div className="flex justify-end pr-[107px] pt-[74px]">
      <DocLogo />
    </div>
    <div className="-mt-[2px] text-[27px] leading-[30px] font-bold text-[#3b87c4]">Dear user,</div>
    <div className="mt-[36px] text-[20.7px] leading-[24px] font-bold text-[#3b87c4] whitespace-nowrap">
      new planograms have been published on Quant web
    </div>
    <div className="flex items-start text-[20.7px] leading-[24px] font-bold text-[#3b87c4] whitespace-nowrap">
      <LinkBox w="w-[190px]">Link to Quant Web App</LinkBox>
      <span>. Please, see the overview of newly published</span>
    </div>
    <div className="-mt-[4px] text-[20.7px] leading-[24px] font-bold text-[#3b87c4]">planograms below.</div>
    <div className="mt-[58px]">Prepared planograms:</div>
    <div className="mt-[19px]">
      <LinkBox w="w-[243px]">Table of Prepared Planograms</LinkBox>
    </div>
    <div className="mt-[18px]">Waiting planograms:</div>
    <div className="mt-[18px]">
      <LinkBox w="w-[234px]">Table of Waiting Planograms</LinkBox>
    </div>
    <div className="mt-[53px]">Thanks,</div>
    <div className="mt-[17px]">Your Category Management Team</div>
    <div className="mt-[40px]">(This message was generated automatically, please do not reply to this email.)</div>
    <Placeholders />
  </div>
);

const EditorToolbars = () => (
  <div className="flex flex-col gap-[10px] pt-[11px] shrink-0 h-[154px]">
    <div className="flex pl-[16px]">
      <PillButton className="w-[102px] h-[29px] shrink-0 text-[16.5px]" icon={<SaveIcon />} label="Save" />
      <Group className="w-[169px] ml-[18px]" items={[<PageIcon />, <Scissors size={24} color="#444" strokeWidth={1.3} />, <PasteIcon />]} />
      <Group className="w-[64px] ml-[18px]" items={[<CalendarIcon />]} />
      <Group className="w-[56px] ml-[35px]" items={[<VariableIcon />]} />
      <Group className="w-[111px] ml-[9px] rounded-l-none" items={[<FaReply size={20} color={NAVY} />, <FaShare size={20} color={NAVY} />]} />
      <Group className="w-[287px] ml-[10px] rounded-r-none" items={[<FindIcon />, <ReplaceIcon />, <LinkIcon />, <BrushIcon />, <CalendarIcon />]} />
    </div>
    <div className="flex pl-[6px]">
      <Group className="w-[112px] rounded-l-none" items={[tableIcons.rowBelow, tableIcons.colLeft]} />
      <Group className="w-[281px] ml-[18px]" items={[tableIcons.delCol, tableIcons.outer, tableIcons.vert, tableIcons.horz, tableIcons.inner]} />
      <Group
        className="w-[393px] ml-[17px] rounded-r-none"
        items={[
          tableIcons.merge,
          tableIcons.split,
          tableIcons.propT,
          tableIcons.propC,
          <GText className="text-[28px]">¶</GText>,
          <ZoomIn size={25} color={NAVY} strokeWidth={1.8} />,
          <ZoomOut size={25} color={NAVY} strokeWidth={1.8} />,
        ]}
      />
    </div>
    <div className="flex pl-[11px] -mt-[4px] text-[16.5px]">
      <div className="w-[176px] h-[29px] bg-white rounded-[8px] shadow-[0_1px_2px_rgba(0,0,0,0.22)] flex items-center justify-between pl-[11px] pr-[5px]">
        Normal
        <ChevronsUpDown size={16} color="#444" />
      </div>
      <div className="w-[161px] h-[29px] ml-[10px] bg-white rounded-[8px] shadow-[0_1px_2px_rgba(0,0,0,0.22)] flex items-center justify-between pl-[11px] pr-[5px]">
        8 (pt)
        <ChevronsUpDown size={16} color="#444" />
      </div>
      <Group className="w-[57px] ml-[16px]" items={[<GText className="text-[31px]">A</GText>]} />
      <Group
        className="w-[449px] ml-[17px]"
        items={[
          <GText className="text-[30px] font-bold">B</GText>,
          <GText className="text-[31px] italic font-['Liberation_Serif',serif]">I</GText>,
          <GText className="text-[24px] underline underline-offset-[3px]">U</GText>,
          <GText className="text-[12px] line-through">abc</GText>,
          <GText className="text-[24px]">X<sub className="text-[11px]">2</sub></GText>,
          <GText className="text-[24px]">X<sup className="text-[11px]">2</sup></GText>,
          <GText className="text-[27px]">A<span className="text-[9px] align-top text-[#2a5fa5]">▼</span></GText>,
          <GText className="text-[27px]">A<span className="text-[9px] align-top text-[#2a5fa5]">▲</span></GText>,
        ]}
      />
    </div>
    <div className="flex pl-[16px] -mt-[3px]">
      <Group
        className="w-[280px]"
        items={[<IndentIcon out />, <IndentIcon />, <NumListIcon />, <BulletListIcon />, <BordersIcon />]}
      />
      <Group className="w-[112px] ml-[18px]" items={[<ColorA bar="bg-[#c2303a]" />, <ColorA bar="bg-[#f2a93b]" pen />]} />
    </div>
  </div>
);

const Fieldset = ({ legend, className, children }: { legend: string; className: string; children?: ReactNode }) => (
  <div className={`relative border-2 border-[#bfbfbf] ${className}`}>
    <span className="absolute left-[9px] -top-[12px] px-[1px] bg-[#eeeeee] text-[18px] leading-[20px]">{legend}</span>
    {children}
  </div>
);

const Dialog = () => (
  <div className="absolute left-[587px] top-[451px] w-[2104px] h-[989px] flex flex-col bg-[#eeeeee] rounded-t-[16px] rounded-b-[6px] overflow-hidden border border-[#d9d9d9] shadow-[0_4px_34px_rgba(0,0,0,0.28)]">
    <div className="relative h-[40px] shrink-0 flex items-center bg-[#f6f6f6] border-b-2 border-[#e4e4e4]">
      <Lights className="ml-[11px]" />
      <div className="absolute inset-0 flex items-center justify-center font-bold text-[16.4px]">
        TESTING Notification - Reminder - Global
      </div>
    </div>
    <div className="flex-1 min-h-0 flex">
      <div className="w-[722px] shrink-0 flex flex-col">
        <SearchBox className="w-[413px] h-[30px] ml-[4px] mt-[4px]" />
        <div className="mt-[6px] flex-1 bg-white border-r-2 border-[#c8c8c8]">
          <PropSheet data={dialogProps} labelW="w-[302px]" valuePad="pl-[1px]" />
        </div>
      </div>
      <SplitArrows className="w-[12px] pt-[16px]" />
      <div className="w-[918px] shrink-0 flex flex-col">
        <EditorToolbars />
        <div className="flex-1 min-h-0 flex flex-col border-t-2 border-l-2 border-[#a8a8a8]">
          <HRuler />
          <div className="flex-1 min-h-0 flex">
            <VRuler />
            <Document />
            <div className="w-[23px] shrink-0 bg-[#f1f1f1] pl-[3px] pr-[8px]">
              <div className="w-[12px] h-[530px] rounded-full bg-[#bdbdbd]" />
            </div>
          </div>
        </div>
      </div>
      <SplitArrows className="w-[13px] pt-[16px]" />
      <div className="flex-1 min-w-0 flex flex-col">
        <Fieldset legend="Description" className="h-[128px] mt-[10px] mr-[4px] pl-[11px] pt-[24px] text-[18px] leading-[20px]">
          Click to a variable to edit its properties.
        </Fieldset>
        <Fieldset legend="Preview" className="h-[271px] mt-[22px] mr-[4px] pl-[11px] pr-[9px] pt-[21px]">
          <div className="h-[237px] bg-white border-2 border-[#a8a8a8]" />
        </Fieldset>
        <SearchBox className="w-[414px] h-[30px] mt-[15px]" />
        <div className="flex-1 mt-[7px] -ml-[3px] bg-white border-t-2 border-l-2 border-[#cfcfcf]" />
      </div>
    </div>
  </div>
);

export default function App() {
  return (
    <div className="relative w-[2940px] h-[1448px] overflow-hidden bg-white text-black font-['DejaVu_Sans',sans-serif]">
      <div className="ml-[4px] w-[2932px] h-full flex flex-col bg-[#eeeeee]">
        <div className="relative h-[38px] shrink-0 flex items-center bg-[#f6f6f6] border-b-2 border-[#e2e2e2]">
          <Lights className="ml-[10px]" />
          <div className="absolute inset-0 flex items-center justify-center font-bold text-[16.6px]">
            TESTING Quant Explorer - Notification Settings
          </div>
        </div>
        <div className="h-[45px] shrink-0 flex items-center border-b-2 border-[#c8c8c8]">
          <div className="ml-[6px] w-[32px] h-[32px] bg-[#a8cbe8] flex items-center justify-center">
            <Svg w={24} h={24}>
              <rect x="1.5" y="1.5" width="21" height="21" rx="3" stroke="#3a8ba6" strokeWidth="2" />
              <path d="M9.5 2v20" stroke="#3a8ba6" strokeWidth="1.8" />
              <path d="M5.5 7v1M5.5 12v1M5.5 17v1" stroke="#3a8ba6" strokeWidth="2" />
            </Svg>
          </div>
          <div className="w-[70px] flex justify-center">
            <Svg w={24}>
              <path d="M12 1l3.3 7.5 8 .8-6 5.3 1.8 8L12 18.4l-7.1 4.2 1.8-8-6-5.3 8-.8z" fill="#3a8aa8" />
            </Svg>
          </div>
          <div className="w-[32px] flex justify-center">
            <Svg w={24} h={16}>
              <path d="M8 8h15" stroke="#ee7a2c" strokeWidth="4" strokeLinecap="butt" />
              <path d="M0 8l10-7v14z" fill="#ee7a2c" />
            </Svg>
          </div>
          <div className="w-[70px] flex justify-center">
            <Svg w={24} h={16}>
              <path d="M1 8h15" stroke="#8a8a8a" strokeWidth="4" strokeLinecap="butt" />
              <path d="M24 8 14 1v14z" fill="#8a8a8a" />
            </Svg>
          </div>
          <div className="ml-auto mr-[9px]">
            <Svg w={24} h={24}>
              <circle cx="12" cy="12" r="10.5" stroke="#5c9d46" strokeWidth="2" />
              <circle cx="8.5" cy="9.5" r="1.2" fill="#3e8f52" />
              <circle cx="15.5" cy="9.5" r="1.2" fill="#3e8f52" />
              <path d="M7.5 14.5c2 3 7 3 9 0" stroke="#3e8f52" strokeWidth="1.5" />
            </Svg>
          </div>
        </div>
        <div className="flex-1 min-h-0 flex">
          <Sidebar />
          <div className="w-[7px] shrink-0 bg-[#e2e2e2] border-x border-[#cfcfcf]" />
          <main className="flex-1 min-w-0 flex flex-col">
            <TopTabs />
            <SubTabs />
            <div className="flex-1 min-h-0 flex">
              <div className="w-[1241px] shrink-0 flex">
                <div className="w-[55px] shrink-0 flex flex-col items-center pt-[2px] pr-[5px]">
                  {[
                    <SideCheck />,
                    <SideCopy />,
                    <SideQuestion />,
                    <SidePointer />,
                    <SideClipboard />,
                    <ExportIcon dot="#2f84ad" glyph={<path d="M17 4v7M14.5 9l2.5 3 2.5-3" stroke="#fff" strokeWidth="1.5" />} />,
                    <ExportIcon dot="#ee9a2c" glyph={<circle cx="17" cy="8" r="2.5" fill="#fff" />} />,
                    <SideCsv />,
                    <TableGear arrows />,
                    <SideChart />,
                  ].map((icon, i) => (
                    <div key={i} className="h-[42.8px] flex items-center justify-center">
                      {icon}
                    </div>
                  ))}
                </div>
                <div className="flex-1 min-w-0 flex flex-col">
                  <div className="h-[46px] shrink-0 flex items-center">
                    <div className="w-[52px] flex justify-center pr-[8px]">
                      <TableGear />
                    </div>
                    <SearchBox className="w-[413px] h-[30px]" />
                    <PillButton className="w-[77px] h-[32px] ml-[17px] text-[14.5px]" icon={<SaveIcon />} label="Save" />
                    <PillButton className="w-[84px] h-[32px] ml-[9px] text-[14.5px]" icon={<OpenIcon />} label="Open" />
                    <PillButton className="w-[117px] h-[32px] ml-[9px] text-[14.5px]" icon={<SendIcon />} label="Send Test" />
                  </div>
                  <div className="flex-1 min-h-0 flex flex-col bg-white border-t-2 border-l-2 border-[#d4d4d4] pr-[3px]">
                    <NotificationTable />
                    <div className="mt-auto mb-[13px] ml-[3px] w-[88px] h-[9px] rounded-full bg-[#bdbdbd]" />
                  </div>
                </div>
              </div>
              <div className="w-[2px] shrink-0 bg-[#d4d4d4]" />
              <SplitArrows className="w-[12px] pt-[14px]" />
              <div className="flex-1 min-w-0 flex flex-col">
                <SearchBox className="w-[414px] h-[32px] ml-[4px] mt-[1px]" />
                <div className="mt-[5px] flex-1 bg-white">
                  <PropSheet data={mainProps} labelW="w-[559px]" valuePad="pl-[3px]" />
                </div>
              </div>
            </div>
          </main>
        </div>
      </div>
      <div className="absolute left-[440px] top-[104px] w-[298px] h-[51px] rounded-[16px] border-[13px] border-[#3a7abf]" />
      <Dialog />
      <svg width="12" height="10" viewBox="0 0 12 10" className="absolute left-0 top-0">
        <path d="M0 0h12Q5 1 0 9z" fill="#6f9be0" />
      </svg>
      <svg width="12" height="10" viewBox="0 0 12 10" className="absolute right-0 top-0">
        <path d="M12 0H0q7 1 12 9z" fill="#6f9be0" />
      </svg>
    </div>
  );
}
